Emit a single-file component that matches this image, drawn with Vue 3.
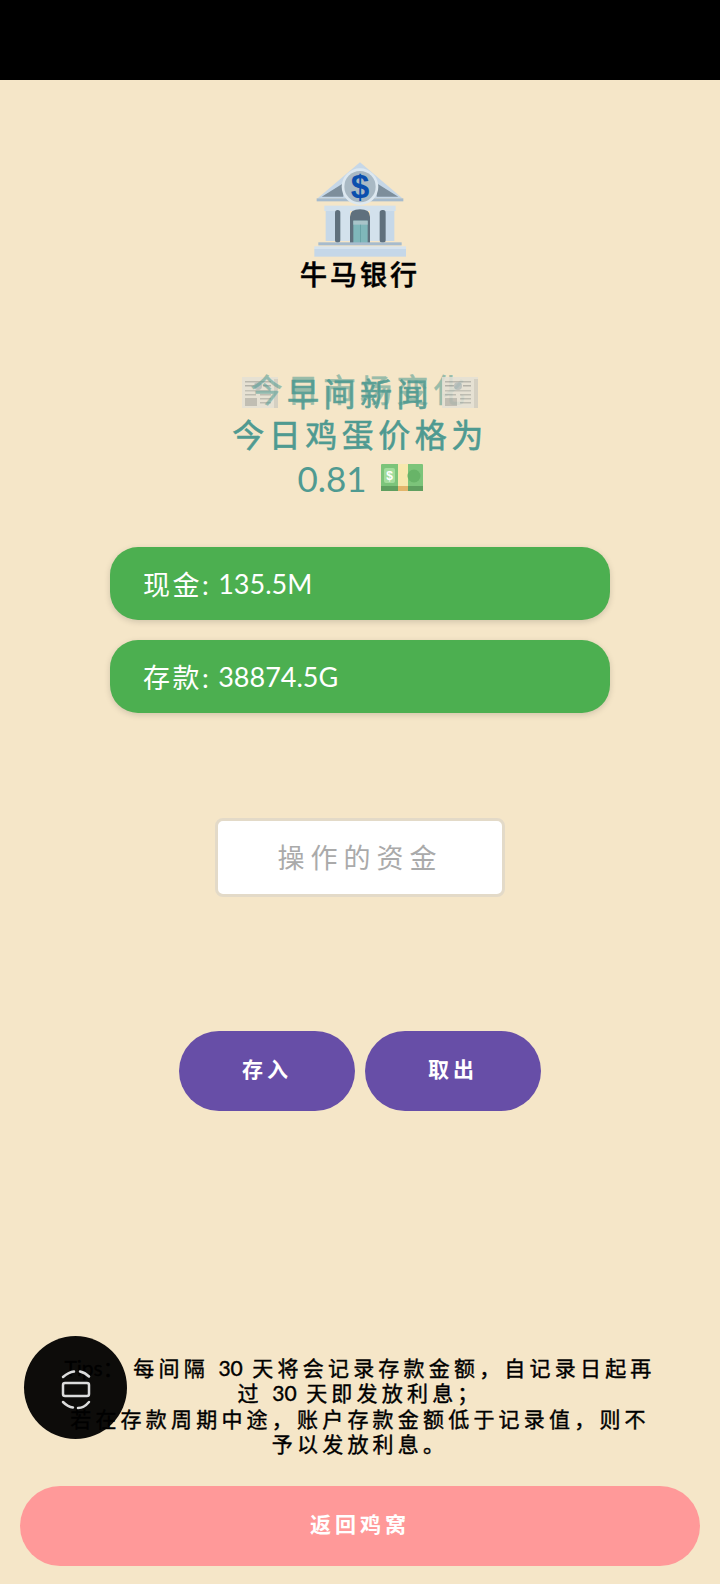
<script setup>
const balances = [
  { label: '现金', value: '135.5M' },
  { label: '存款', value: '38874.5G' }
]
</script>

<template>
  <div class="page">
    <div class="status-bar"></div>

    <svg class="bank-icon" viewBox="0 0 330 315" width="110" height="105">
      <polygon points="165,22 292,130 38,130" fill="#c6d7e7" />
      <polygon points="50,125 115,85 115,125" fill="#7d8e9b" />
      <polygon points="215,85 280,125 215,125" fill="#7d8e9b" />
      <rect x="35" y="130" width="260" height="9" fill="#a6bbcd" />
      <rect x="58" y="152" width="214" height="16" fill="#d3e1ec" />
      <rect x="62" y="168" width="30" height="90" fill="#c6d8e8" />
      <rect x="105" y="168" width="30" height="90" fill="#d3e1ec" />
      <rect x="195" y="168" width="30" height="90" fill="#d3e1ec" />
      <rect x="238" y="168" width="30" height="90" fill="#c6d8e8" />
      <rect x="90" y="165" width="16" height="98" rx="8" fill="#5f707d" />
      <rect x="224" y="165" width="18" height="98" rx="8" fill="#5f707d" />
      <path d="M135 265V185q0-22 30-22t30 22v80z" fill="#5f707d" />
      <rect x="145" y="197" width="43" height="68" fill="#7fb7ba" />
      <rect x="145" y="197" width="43" height="12" fill="#a9c4c9" />
      <rect x="165" y="209" width="2" height="56" fill="#5e9a9e" />
      <rect x="40" y="262" width="250" height="9" fill="#a6bbcd" />
      <rect x="28" y="274" width="275" height="8" fill="#d6e3ee" />
      <rect x="28" y="282" width="275" height="23" fill="#c5d7e8" />
      <circle cx="165" cy="95" r="55" fill="#dde8f0" />
      <circle cx="165" cy="95" r="47" fill="#a9b9c4" />
      <text x="165" y="130" text-anchor="middle" class="bank-dollar">$</text>
    </svg>
    <div class="bank-name">牛马银行</div>

    <div class="headline">
      <div class="news-row">
        <svg v-for="n in 2" :key="n" class="paper" :class="{ last: n === 2 }" viewBox="0 0 36 34" width="36" height="34">
          <rect x="0" y="2" width="36" height="31" fill="#e4e1d6" />
          <rect x="32" y="4" width="4" height="29" fill="#d0cdc2" />
          <rect x="3" y="6" width="26" height="1.5" fill="#b0b0a9" />
          <rect x="3" y="10" width="9" height="1.5" fill="#a9a9a3" />
          <rect x="21" y="10" width="8" height="1.5" fill="#a9a9a3" />
          <circle cx="16" cy="11" r="4" fill="#b4bcbc" />
          <rect x="3" y="15" width="26" height="1.5" fill="#bcbcb4" />
          <rect x="3" y="19" width="11" height="1.5" fill="#b5b5ae" />
          <rect x="18" y="19" width="11" height="1.5" fill="#b5b5ae" />
          <rect x="18" y="23" width="11" height="1.5" fill="#b5b5ae" />
          <rect x="3" y="23" width="12" height="8" fill="#b8b8b0" />
          <rect x="18" y="27" width="11" height="1.5" fill="#b5b5ae" />
        </svg>
        <span class="news-title">早间新闻</span>
        <span class="news-ghost">今日市场变化</span>
      </div>
      <div class="news-line">今日鸡蛋价格为</div>
      <div class="price-line">
        <span>0.81</span>
        <svg class="money" viewBox="0 0 42 28" width="42" height="28">
          <rect x="0" y="0" width="42" height="24" rx="1" fill="#7cc47a" />
          <rect x="0" y="22" width="42" height="5" fill="#5f9f5f" />
          <rect x="17" y="0" width="10" height="24" fill="#f7e8ae" />
          <rect x="17" y="22" width="10" height="5" fill="#e3b56a" />
          <rect x="3" y="4" width="11" height="15" rx="2" fill="#a3dc9c" />
          <text x="8.5" y="16" text-anchor="middle" class="money-dollar">$</text>
          <circle cx="33" cy="12" r="6.5" fill="#68b468" />
        </svg>
      </div>
    </div>

    <div class="balances">
      <div v-for="item in balances" :key="item.label" class="balance-card">
        <span class="balance-label">{{ item.label }}:</span> {{ item.value }}
      </div>
    </div>

    <input class="amount-input" type="text" placeholder="操作的资金" />

    <div class="actions">
      <button class="action-btn">存入</button>
      <button class="action-btn">取出</button>
    </div>

    <div class="tips">
      <span class="latin">Tips：</span> 每间隔 <span class="latin">30</span> 天将会记录存款金额，自记录日起再过 <span class="latin">30</span> 天即发放利息；<br />
      若在存款周期中途，账户存款金额低于记录值，则不予以发放利息。
    </div>

    <button class="back-btn">返回鸡窝</button>

    <div class="float-ball">
      <svg viewBox="0 0 40 48" width="40" height="48" fill="none" stroke="#dcdcdc" stroke-width="2.5">
        <rect x="7" y="19" width="26" height="13" rx="2" />
        <path d="M7 13q6-5 11-5.5M24 7.5q5 1 9 5" stroke-linecap="round" />
        <path d="M7 38q5 5 10 5.5M22 44q6 0 11-6" stroke-linecap="round" />
      </svg>
    </div>
  </div>
</template>

<style scoped>
.page {
  position: relative;
  width: 720px;
  height: 1584px;
  overflow: hidden;
  display: flex;
  flex-direction: column;
  align-items: center;
  background: #f5e6c8;
  font-family: Lato, "Noto Sans CJK SC", sans-serif;
}

.status-bar {
  align-self: stretch;
  height: 80px;
  background: #000;
}

.bank-icon {
  margin-top: 75px;
}

.bank-dollar {
  font-family: "Liberation Sans", sans-serif;
  font-weight: 700;
  font-size: 100px;
  fill: #0b4fae;
}

.bank-name {
  height: 30px;
  line-height: 30px;
  font-size: 27px;
  font-weight: 500;
  letter-spacing: 3px;
  color: #000;
  -webkit-text-stroke: 0.5px #000;
}

.headline {
  margin-top: 80px;
  color: #4f9a91;
  text-align: center;
}

.news-row {
  position: relative;
  height: 43px;
  width: 236px;
  margin: 0 auto;
  display: flex;
  justify-content: space-between;
  align-items: center;
  font-size: 32px;
  line-height: 43px;
  letter-spacing: 4.5px;
  -webkit-text-stroke: 0.6px #4f9a91;
}

.paper {
  opacity: 0.85;
}

.paper.last {
  order: 2;
}

.news-title {
  order: 1;
  white-space: nowrap;
  opacity: 0.9;
  padding-top: 3px;
}

.news-ghost {
  position: absolute;
  left: 50%;
  top: -2px;
  transform: translateX(-50%);
  white-space: nowrap;
  opacity: 0.55;
}

.news-line {
  height: 43px;
  line-height: 43px;
  font-size: 32px;
  letter-spacing: 4.5px;
  white-space: nowrap;
  -webkit-text-stroke: 0.6px #4f9a91;
}

.price-line {
  height: 43px;
  display: flex;
  justify-content: center;
  align-items: center;
  gap: 14px;
  font-size: 35px;
}

.money-dollar {
  font-family: "Liberation Sans", sans-serif;
  font-weight: 700;
  font-size: 12px;
  fill: #fff;
}

.balances {
  margin-top: 48px;
  display: flex;
  flex-direction: column;
  gap: 20px;
}

.balance-card {
  width: 500px;
  height: 73px;
  box-sizing: border-box;
  padding-left: 33px;
  display: flex;
  align-items: center;
  white-space: pre;
  border-radius: 28px;
  background: #4caf50;
  color: #fff;
  font-size: 27px;
  box-shadow: 0 2px 6px rgba(0, 0, 0, 0.15);
}

.balance-label {
  letter-spacing: 2.5px;
}

.amount-input {
  margin-top: 105px;
  width: 290px;
  height: 79px;
  box-sizing: border-box;
  border: 3px solid #e3dac8;
  border-radius: 8px;
  background: #fff;
  text-align: center;
  font-family: inherit;
  font-size: 27px;
  letter-spacing: 6px;
  outline: none;
}

.amount-input::placeholder {
  color: #aaa;
  opacity: 1;
}

.actions {
  margin-top: 134px;
  display: flex;
  gap: 10px;
}

.action-btn {
  width: 176px;
  height: 80px;
  padding: 0 0 6px;
  border: none;
  border-radius: 40px;
  background: #674ea7;
  color: #fff;
  font-family: inherit;
  font-size: 21px;
  font-weight: 700;
  letter-spacing: 4px;
}

.tips {
  margin-top: 244px;
  width: 600px;
  text-align: center;
  font-size: 21px;
  line-height: 25.3px;
  letter-spacing: 4.2px;
  color: #000;
  -webkit-text-stroke: 0.4px #000;
}

.latin {
  letter-spacing: 0;
}

.back-btn {
  margin-top: 30px;
  width: 680px;
  height: 80px;
  padding: 0 0 6px;
  border: none;
  border-radius: 40px;
  background: #ff9999;
  color: #fff;
  font-family: inherit;
  font-size: 21px;
  font-weight: 700;
  letter-spacing: 4px;
}

.float-ball {
  position: absolute;
  left: 24px;
  top: 1336px;
  width: 103px;
  height: 103px;
  border-radius: 50%;
  background: rgba(0, 0, 0, 0.95);
  display: flex;
  align-items: center;
  justify-content: center;
}
</style>

<style>
body {
  margin: 0;
  background: #f5e6c8;
}
</style>
